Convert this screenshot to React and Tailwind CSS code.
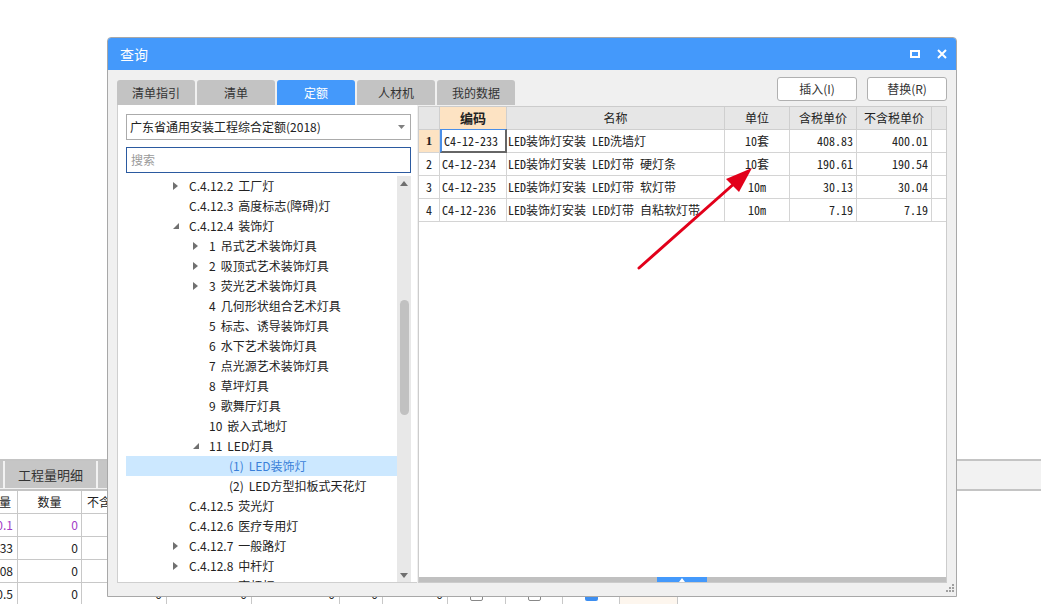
import React from "react";

const tree = [
  { l: 0, a: "c", t: "C.4.12.2 工厂灯" },
  { l: 0, t: "C.4.12.3 高度标志(障碍)灯" },
  { l: 0, a: "o", t: "C.4.12.4 装饰灯" },
  { l: 1, a: "c", t: "1 吊式艺术装饰灯具" },
  { l: 1, a: "c", t: "2 吸顶式艺术装饰灯具" },
  { l: 1, a: "c", t: "3 荧光艺术装饰灯具" },
  { l: 1, t: "4 几何形状组合艺术灯具" },
  { l: 1, t: "5 标志、诱导装饰灯具" },
  { l: 1, t: "6 水下艺术装饰灯具" },
  { l: 1, t: "7 点光源艺术装饰灯具" },
  { l: 1, t: "8 草坪灯具" },
  { l: 1, t: "9 歌舞厅灯具" },
  { l: 1, t: "10 嵌入式地灯" },
  { l: 1, a: "o", t: "11 LED灯具" },
  { l: 2, t: "(1) LED装饰灯", sel: true },
  { l: 2, t: "(2) LED方型扣板式天花灯" },
  { l: 0, t: "C.4.12.5 荧光灯" },
  { l: 0, t: "C.4.12.6 医疗专用灯" },
  { l: 0, a: "c", t: "C.4.12.7 一般路灯" },
  { l: 0, a: "c", t: "C.4.12.8 中杆灯" },
  { l: 0, a: "c", t: "C.4.12.9 高杆灯" },
];

const rows = [
  { no: "1", code: "C4-12-233", name: "LED装饰灯安装 LED洗墙灯", unit: "10套", tax: "408.83", notax: "400.01" },
  { no: "2", code: "C4-12-234", name: "LED装饰灯安装 LED灯带 硬灯条", unit: "10套", tax: "190.61", notax: "190.54" },
  { no: "3", code: "C4-12-235", name: "LED装饰灯安装 LED灯带 软灯带", unit: "10m", tax: "30.13", notax: "30.04" },
  { no: "4", code: "C4-12-236", name: "LED装饰灯安装 LED灯带 自粘软灯带", unit: "10m", tax: "7.19", notax: "7.19" },
];

const pads = ["pl-[43px]", "pl-[63px]", "pl-[83px]"];
const mono = "font-['Noto_Sans_Mono_CJK_SC','Liberation_Mono','Noto_Sans_CJK_SC',monospace]";

const bgRows = [
  { a: "10.1", b: "0", purple: true },
  { a: "1.33", b: "0" },
  { a: "3.08", b: "0" },
  { a: "10.5", b: "0", last: true },
];

function Arrow({ open }) {
  return open ? (
    <svg width="6" height="6" viewBox="0 0 6 6">
      <polygon points="6,0 6,6 0,6" fill="#707070" />
    </svg>
  ) : (
    <svg width="5" height="8" viewBox="0 0 5 8">
      <polygon points="0,0 5,4 0,8" fill="#707070" />
    </svg>
  );
}

function Tab({ label, active }) {
  return (
    <div
      className={`w-[78px] h-[25px] rounded-t-[3px] flex items-center justify-center text-[12px] ${
        active ? "bg-[#4499fb] text-white" : "bg-[#c3c3c3] text-[#333]"
      }`}
    >
      {label}
    </div>
  );
}

function Label({ text }) {
  const i = text.indexOf(" ");
  return (
    <span>
      {text.slice(0, i)}
      <span className="ml-[5px]">{text.slice(i + 1)}</span>
    </span>
  );
}

export default function App() {
  return (
    <div className="relative w-[1041px] h-[604px] overflow-hidden bg-white font-['Noto_Sans_CJK_SC','Noto_Sans',sans-serif] text-[#222]">
      {/* background window */}
      <div className="h-[459px]" />
      <div className="h-[32px] border-t-2 border-b-2 border-[#c4c4c4] bg-[#f2f2f2] flex">
        <div className="w-[3px] h-[27px] bg-[#c6c6c6]" />
        <div className="w-[91px] h-[27px] ml-[2px] bg-[#c6c6c6] flex items-center justify-center text-[13px] text-[#333]">
          工程量明细
        </div>
        <div className="w-[100px] h-[27px] ml-[2px] bg-[#c6c6c6]" />
      </div>
      <div className="w-[678px] text-[12px]">
        <div className="flex h-[23px] border-b border-[#c8c8c8]">
          <div className="w-[18px] border-r border-[#c8c8c8] overflow-hidden flex justify-end items-center pr-[6px] whitespace-nowrap">
            工程量
          </div>
          <div className="w-[64px] border-r border-[#c8c8c8] flex items-center justify-center">数量</div>
          <div className="w-[85px] border-r border-[#c8c8c8] flex items-center pl-[5px] whitespace-nowrap overflow-hidden">
            不含税单价
          </div>
        </div>
        {bgRows.map((r, i) => (
          <div key={i} className="flex h-[23px] border-b border-[#c8c8c8]">
            <div
              className={`w-[18px] border-r border-[#c8c8c8] overflow-hidden flex justify-end items-center pr-[4px] whitespace-nowrap ${
                r.purple ? "text-[#a23cc6]" : ""
              }`}
            >
              {r.a}
            </div>
            <div
              className={`w-[64px] border-r border-[#c8c8c8] flex justify-end items-center pr-[3px] ${
                r.purple ? "text-[#a23cc6]" : ""
              }`}
            >
              {r.b}
            </div>
            <div className="w-[85px] border-r border-[#c8c8c8] flex justify-end items-center pr-[4px]">{r.last ? "0" : ""}</div>
            <div className="w-[85px] border-r border-[#c8c8c8] flex justify-end items-center pr-[4px]">{r.last ? "0" : ""}</div>
            <div className="w-[88px] border-r border-[#c8c8c8] flex justify-end items-center pr-[4px]">{r.last ? "0" : ""}</div>
            <div className="w-[43px] border-r border-[#c8c8c8] flex justify-end items-center pr-[4px]">{r.last ? "0" : ""}</div>
            <div className="w-[65px] border-r border-[#c8c8c8] flex justify-end items-center pr-[4px]">{r.last ? "0" : ""}</div>
            <div className="w-[58px] border-r border-[#c8c8c8] flex justify-center items-center">
              <div className="w-[13px] h-[13px] border border-[#888] rounded-[2px] bg-white" />
            </div>
            <div className="w-[57px] border-r border-[#c8c8c8] flex justify-center items-center">
              <div className="w-[13px] h-[13px] border border-[#888] rounded-[2px] bg-white" />
            </div>
            <div className="w-[57px] border-r border-[#c8c8c8] flex justify-center items-center">
              <div className="w-[13px] h-[13px] rounded-[2px] bg-[#3d8ef0]" />
            </div>
            <div className="w-[58px] border-r border-[#c8c8c8] bg-[#fdf6ee]" />
          </div>
        ))}
      </div>

      {/* dialog */}
      <div className="absolute left-[107px] top-[37px] w-[850px] h-[560px] flex flex-col bg-[#f0f0f0] border border-[#a8a8a8] rounded-t-[4px] overflow-hidden">
        <div className="h-[32px] bg-[#4499fb] flex items-center justify-between pl-[12px] pr-[9px] text-white text-[14px]">
          <span>查询</span>
          <div className="flex items-center gap-[17px]">
            <div className="w-[10px] h-[8px] border-2 border-white" />
            <svg width="10" height="10" viewBox="0 0 10 10">
              <path d="M1 1 L9 9 M9 1 L1 9" stroke="white" strokeWidth="2" />
            </svg>
          </div>
        </div>

        <div className="flex-1 flex flex-col px-[9px]">
          <div className="mt-[7px] h-[28px] flex justify-between">
            <div className="flex gap-[2px] self-end">
              <Tab label="清单指引" />
              <Tab label="清单" />
              <Tab label="定额" active />
              <Tab label="人材机" />
              <Tab label="我的数据" />
            </div>
            <div className="flex gap-[10px]">
              <button className="w-[80px] h-[24px] bg-white border border-[#b0b0b0] rounded-[3px] text-[12px] text-[#333]">
                插入(I)
              </button>
              <button className="w-[80px] h-[24px] bg-white border border-[#b0b0b0] rounded-[3px] text-[12px] text-[#333]">
                替换(R)
              </button>
            </div>
          </div>

          <div className="h-[478px] flex items-start">
            {/* left panel */}
            <div className="w-[300px] h-[478px] bg-white border-l border-b border-[#cfcfcf] pl-[8px] flex flex-col">
              <div className="mt-[9px] w-[285px] h-[26px] border border-[#ababab] flex items-center justify-between pl-[3px] pr-[5px] text-[12px]">
                <span>广东省通用安装工程综合定额(2018)</span>
                <svg width="7" height="4" viewBox="0 0 7 4">
                  <polygon points="0,0 7,0 3.5,4" fill="#808080" />
                </svg>
              </div>
              <div className="mt-[7px] w-[285px] h-[26px] border border-[#2b5aa0] flex items-center pl-[4px] text-[12px] text-[#9a9a9a]">
                搜索
              </div>
              <div className="mt-[3px] flex-1 flex min-h-0">
                <div className="w-[271px] overflow-hidden">
                  {tree.map((n, i) => (
                    <div
                      key={i}
                      className={`h-[20px] flex items-center whitespace-nowrap text-[12px] ${pads[n.l]} ${
                        n.sel ? "bg-[#cce8ff] text-[#3a7fd8]" : "text-[#222]"
                      }`}
                    >
                      <span className="w-[20px] flex items-center pl-[4px]">
                        {n.a ? <Arrow open={n.a === "o"} /> : null}
                      </span>
                      <Label text={n.t} />
                    </div>
                  ))}
                </div>
                <div className="w-[14px] bg-[#e8e8e8] flex flex-col items-center">
                  <div className="h-[14px] flex items-center justify-center">
                    <svg width="8" height="5" viewBox="0 0 8 5">
                      <polygon points="0,5 8,5 4,0" fill="#6f6f6f" />
                    </svg>
                  </div>
                  <div className="mt-[110px] w-[9px] h-[115px] rounded-full bg-[#c1c1c1]" />
                  <div className="flex-1" />
                  <div className="h-[14px] flex items-center justify-center">
                    <svg width="8" height="5" viewBox="0 0 8 5">
                      <polygon points="0,0 8,0 4,5" fill="#6f6f6f" />
                    </svg>
                  </div>
                </div>
              </div>
            </div>

            {/* right grid */}
            <div className="ml-[1px] mt-[1px] w-[529px] h-[477px] bg-white border border-[#cccccc] flex flex-col">
              <div className="flex h-[23px] bg-[#e6e6e6] border-b border-[#cfcfcf] text-[12px]">
                <div className="w-[21px] border-r border-[#cfcfcf]" />
                <div className="w-[67px] border-r border-[#cfcfcf] bg-[#fde3c3] flex items-center justify-center font-bold text-[13px]">
                  编码
                </div>
                <div className="w-[218px] border-r border-[#cfcfcf] flex items-center justify-center">名称</div>
                <div className="w-[65px] border-r border-[#cfcfcf] flex items-center justify-center">单位</div>
                <div className="w-[67px] border-r border-[#cfcfcf] flex items-center justify-center">含税单价</div>
                <div className="w-[75px] border-r border-[#cfcfcf] flex items-center justify-center">不含税单价</div>
              </div>
              {rows.map((r, i) => (
                <div key={r.no} className={`flex h-[23px] border-b border-[#d4d4d4] text-[12px] ${mono}`}>
                  <div
                    className={`w-[21px] border-r border-[#d4d4d4] flex items-center justify-center ${
                      i === 0 ? "bg-[#fde3c3] font-bold font-['Liberation_Serif',serif] text-[13px]" : ""
                    }`}
                  >
                    {r.no}
                  </div>
                  <div
                    className={`w-[67px] flex items-center pl-[2px] ${
                      i === 0
                        ? "border-l-2 border-l-[#4a8fe8] border-t border-t-[#4a8fe8] border-r-2 border-r-[#666] border-b-2 border-b-[#666] -mb-[1px] -mt-[1px]"
                        : "border-r border-[#d4d4d4]"
                    }`}
                  >
                    {r.code}
                  </div>
                  <div className="w-[218px] border-r border-[#d4d4d4] flex items-center pl-[1px] whitespace-nowrap">
                    {r.name}
                  </div>
                  <div className="w-[65px] border-r border-[#d4d4d4] flex items-center justify-center">{r.unit}</div>
                  <div className="w-[67px] border-r border-[#d4d4d4] flex items-center justify-end pr-[3px]">{r.tax}</div>
                  <div className="w-[75px] border-r border-[#d4d4d4] flex items-center justify-end pr-[3px]">{r.notax}</div>
                </div>
              ))}
              <div className="flex-1" />
              <div className="h-[5px] bg-[#c0c0c0] flex">
                <div className="w-[238px]" />
                <div className="w-[50px] bg-[#4499fb] flex items-center justify-center">
                  <svg width="6" height="4" viewBox="0 0 6 4">
                    <polygon points="0,4 6,4 3,0" fill="white" />
                  </svg>
                </div>
              </div>
            </div>
          </div>

          <div className="flex-1 flex justify-end items-start pt-[1px] -mr-[8px]">
            <svg width="9" height="9" viewBox="0 0 9 9">
              <rect x="6" y="0" width="2" height="2" fill="#a0a0a0" />
              <rect x="3" y="3" width="2" height="2" fill="#a0a0a0" />
              <rect x="6" y="3" width="2" height="2" fill="#a0a0a0" />
              <rect x="0" y="6" width="2" height="2" fill="#a0a0a0" />
              <rect x="3" y="6" width="2" height="2" fill="#a0a0a0" />
              <rect x="6" y="6" width="2" height="2" fill="#a0a0a0" />
            </svg>
          </div>
        </div>
      </div>

      {/* red annotation arrow */}
      <svg className="absolute left-0 top-0 pointer-events-none" width="1041" height="604">
        <line x1="639" y1="268" x2="736" y2="182" stroke="#e2001a" strokeWidth="3" strokeLinecap="round" />
        <polygon points="752,168 726,179 739,192" fill="#e2001a" />
      </svg>
    </div>
  );
}
